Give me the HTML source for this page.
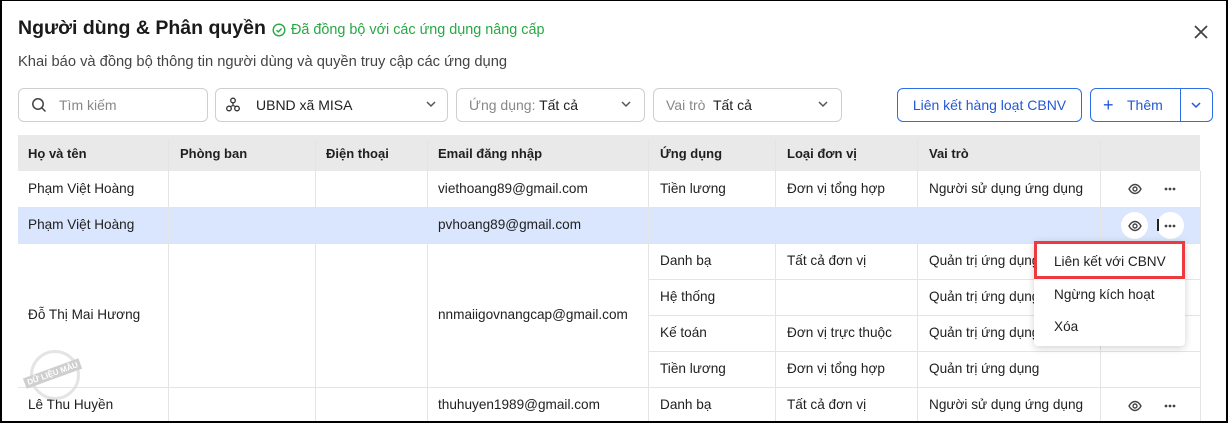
<!DOCTYPE html>
<html><head><meta charset="utf-8"><style>
*{margin:0;padding:0;box-sizing:border-box}
body{width:1228px;height:423px;overflow:hidden;background:#fff;font-family:"Liberation Sans",sans-serif;color:#212121;position:relative}
.a{position:absolute;white-space:nowrap}
.t{font-size:13.6px;color:#212121}
.box{position:absolute;border:1px solid #cfcfcf;border-radius:6px;height:34px;top:88px}
.l{position:absolute;background:#e4e4e4}
.h{font-weight:bold;font-size:13px;color:#1f1f1f}
</style></head><body>
<div class="a" style="left:0;top:0;width:1228px;height:423px;border:1px solid #000;border-left-width:2px;border-bottom-width:2px;border-right-width:2px;z-index:50;pointer-events:none"></div>
<div class="a" style="left:18px;top:17px;font-size:19.5px;font-weight:bold;color:#1a1a1a">Người dùng &amp; Phân quyền</div>
<svg class="a" style="left:272px;top:23px" width="14" height="14" viewBox="0 0 14 14"><circle cx="7" cy="7" r="5.8" fill="none" stroke="#27a844" stroke-width="1.4"/><path d="M4.5 7.2l1.8 1.7 3.3-3.4" fill="none" stroke="#27a844" stroke-width="1.4"/></svg>
<div class="a" style="left:291px;top:22px;font-size:14.4px;color:#27a844">Đã đồng bộ với các ứng dụng nâng cấp</div>
<svg class="a" style="left:1193px;top:24px" width="16" height="16" viewBox="0 0 16 16"><path d="M2 2L14 14M14 2L2 14" stroke="#444" stroke-width="1.8"/></svg>
<div class="a" style="left:18px;top:54px;font-size:14.7px;color:#444">Khai báo và đồng bộ thông tin người dùng và quyền truy cập các ứng dụng</div>

<div class="box" style="left:18px;width:190px"></div>
<svg class="a" style="left:31px;top:97px" width="16" height="16" viewBox="0 0 16 16"><circle cx="7" cy="7" r="5.2" fill="none" stroke="#444" stroke-width="1.5"/><path d="M11 11l3.5 3.5" stroke="#444" stroke-width="1.5"/></svg>
<div class="a t" style="left:59px;top:97px;color:#888;font-size:14px">Tìm kiếm</div>
<div class="box" style="left:215px;width:233px"></div>
<svg class="a" style="left:226px;top:97px" width="14" height="15" viewBox="0 0 14 15"><circle cx="7" cy="3.5" r="2.3" fill="none" stroke="#333" stroke-width="1.3"/><circle cx="3" cy="11.5" r="2.3" fill="none" stroke="#333" stroke-width="1.3"/><circle cx="11" cy="11.5" r="2.3" fill="none" stroke="#333" stroke-width="1.3"/><path d="M7 6v2.5M4.5 9.5l2.5-1 2.5 1" fill="none" stroke="#333" stroke-width="1.2"/></svg>
<div class="a t" style="left:256px;top:97px;font-size:14px">UBND xã MISA</div>
<svg class="a" style="left:425px;top:100px" width="12" height="8" viewBox="0 0 12 8"><path d="M2 2l4 4 4-4" fill="none" stroke="#555" stroke-width="1.5"/></svg>
<div class="box" style="left:456px;width:189px"></div>
<div class="a t" style="left:469px;top:97px;font-size:14px"><span style="color:#888">Ứng dụng:</span> Tất cả</div>
<svg class="a" style="left:620px;top:100px" width="12" height="8" viewBox="0 0 12 8"><path d="M2 2l4 4 4-4" fill="none" stroke="#555" stroke-width="1.5"/></svg>
<div class="box" style="left:653px;width:189px"></div>
<div class="a t" style="left:666px;top:97px;font-size:14px"><span style="color:#888">Vai trò</span>&nbsp; Tất cả</div>
<svg class="a" style="left:817px;top:100px" width="12" height="8" viewBox="0 0 12 8"><path d="M2 2l4 4 4-4" fill="none" stroke="#555" stroke-width="1.5"/></svg>
<div class="box" style="left:897px;width:185px;border-color:#2e6ee6"></div>
<div class="a" style="left:897px;width:185px;top:97px;text-align:center;font-size:14px;color:#2458d6">Liên kết hàng loạt CBNV</div>
<div class="box" style="left:1090px;width:123px;border-color:#2e6ee6"></div>
<div class="l" style="left:1180px;top:89px;width:1px;height:32px;background:#2e6ee6"></div>
<div class="a" style="left:1103px;top:95px;font-size:18px;color:#2458d6">+</div>
<div class="a" style="left:1127px;top:97px;font-size:14px;color:#2458d6">Thêm</div>
<svg class="a" style="left:1190px;top:101px" width="12" height="8" viewBox="0 0 12 8"><path d="M2 2l4 4 4-4" fill="none" stroke="#2458d6" stroke-width="1.5"/></svg>

<div class="a" style="left:18px;top:135px;width:1182px;height:36px;background:#e9e9e9"></div>
<div class="a" style="left:18px;top:207px;width:1182px;height:36px;background:#d9e6fd"></div>
<div class="l" style="left:168px;top:140px;width:1px;height:283px"></div>
<div class="l" style="left:315px;top:140px;width:1px;height:283px"></div>
<div class="l" style="left:427px;top:140px;width:1px;height:283px"></div>
<div class="l" style="left:648px;top:140px;width:1px;height:283px"></div>
<div class="l" style="left:775px;top:140px;width:1px;height:283px"></div>
<div class="l" style="left:917px;top:140px;width:1px;height:283px"></div>
<div class="l" style="left:1100px;top:140px;width:1px;height:283px"></div>
<div class="l" style="left:1200px;top:171px;width:1px;height:252px"></div>
<div class="l" style="left:18px;top:207px;width:1182px;height:1px"></div>
<div class="l" style="left:18px;top:243px;width:1182px;height:1px"></div>
<div class="l" style="left:648px;top:279px;width:552px;height:1px"></div>
<div class="l" style="left:648px;top:315px;width:552px;height:1px"></div>
<div class="l" style="left:648px;top:351px;width:552px;height:1px"></div>
<div class="l" style="left:18px;top:387px;width:1182px;height:1px"></div>

<div class="a h" style="left:28px;top:146px">Họ và tên</div>
<div class="a h" style="left:180px;top:146px">Phòng ban</div>
<div class="a h" style="left:326px;top:146px">Điện thoại</div>
<div class="a h" style="left:438px;top:146px">Email đăng nhập</div>
<div class="a h" style="left:660px;top:146px">Ứng dụng</div>
<div class="a h" style="left:787px;top:146px">Loại đơn vị</div>
<div class="a h" style="left:929px;top:146px">Vai trò</div>

<div class="a t" style="left:28px;top:181px">Phạm Việt Hoàng</div>
<div class="a t" style="left:438px;top:181px">viethoang89@gmail.com</div>
<div class="a t" style="left:660px;top:181px">Tiền lương</div>
<div class="a t" style="left:787px;top:181px">Đơn vị tổng hợp</div>
<div class="a t" style="left:929px;top:181px">Người sử dụng ứng dụng</div>

<div class="a t" style="left:28px;top:217px">Phạm Việt Hoàng</div>
<div class="a t" style="left:438px;top:217px">pvhoang89@gmail.com</div>

<div class="a t" style="left:28px;top:307px">Đỗ Thị Mai Hương</div>
<div class="a t" style="left:438px;top:307px">nnmaiigovnangcap@gmail.com</div>
<div class="a t" style="left:660px;top:253px">Danh bạ</div>
<div class="a t" style="left:787px;top:253px">Tất cả đơn vị</div>
<div class="a t" style="left:929px;top:253px">Quản trị ứng dụng</div>
<div class="a t" style="left:660px;top:289px">Hệ thống</div>
<div class="a t" style="left:929px;top:289px">Quản trị ứng dụng</div>
<div class="a t" style="left:660px;top:325px">Kế toán</div>
<div class="a t" style="left:787px;top:325px">Đơn vị trực thuộc</div>
<div class="a t" style="left:929px;top:325px">Quản trị ứng dụng</div>
<div class="a t" style="left:660px;top:361px">Tiền lương</div>
<div class="a t" style="left:787px;top:361px">Đơn vị tổng hợp</div>
<div class="a t" style="left:929px;top:361px">Quản trị ứng dụng</div>

<div class="a t" style="left:28px;top:397px">Lê Thu Huyền</div>
<div class="a t" style="left:438px;top:397px">thuhuyen1989@gmail.com</div>
<div class="a t" style="left:660px;top:397px">Danh bạ</div>
<div class="a t" style="left:787px;top:397px">Tất cả đơn vị</div>
<div class="a t" style="left:929px;top:397px">Người sử dụng ứng dụng</div>

<div class="a" style="left:1121px;top:212px;width:27px;height:27px;border-radius:50%;background:#fff"></div>
<div class="a" style="left:1157px;top:212px;width:27px;height:27px;border-radius:50%;background:#fff"></div>
<div class="a" style="left:1157px;top:219px;width:1.5px;height:12px;background:#222"></div>

<svg width="0" height="0" style="position:absolute"><defs><g id="eye"><path d="M1 6C3 2.5 5 1.5 7 1.5S11 2.5 13 6C11 9.5 9 10.5 7 10.5S3 9.5 1 6Z" fill="none" stroke="#444" stroke-width="1.4"/><circle cx="7" cy="6" r="2" fill="none" stroke="#444" stroke-width="1.4"/></g><g id="dots"><circle cx="2" cy="2" r="1.4" fill="#444"/><circle cx="6" cy="2" r="1.4" fill="#444"/><circle cx="10" cy="2" r="1.4" fill="#444"/></g></defs></svg>
<svg class="a" style="left:1128px;top:183px" width="14" height="12"><use href="#eye"/></svg>
<svg class="a" style="left:1164px;top:187px" width="12" height="4"><use href="#dots"/></svg>
<svg class="a" style="left:1128px;top:220px" width="14" height="12"><use href="#eye"/></svg>
<svg class="a" style="left:1164px;top:224px" width="12" height="4"><use href="#dots"/></svg>
<svg class="a" style="left:1128px;top:400px" width="14" height="12"><use href="#eye"/></svg>
<svg class="a" style="left:1164px;top:404px" width="12" height="4"><use href="#dots"/></svg>

<div class="a" style="left:1034px;top:241px;width:151px;height:105px;background:#fff;border-radius:4px;box-shadow:0 2px 8px rgba(0,0,0,.18)"></div>
<div class="a" style="left:1034px;top:241px;width:151px;height:38px;border:3px solid #ec3a3f"></div>
<div class="a t" style="left:1054px;top:254px">Liên kết với CBNV</div>
<div class="a t" style="left:1054px;top:287px">Ngừng kích hoạt</div>
<div class="a t" style="left:1054px;top:319px">Xóa</div>

<div class="a" style="left:30px;top:350px;width:50px;height:50px;border:3px solid #ddd;border-radius:50%;opacity:.8"></div>
<div class="a" style="left:23px;top:368px;background:#cfcfcf;color:#fff;font-size:8px;font-weight:bold;padding:1px 3px;transform:rotate(-20deg)">DỮ LIỆU MẪU</div>
</body></html>
